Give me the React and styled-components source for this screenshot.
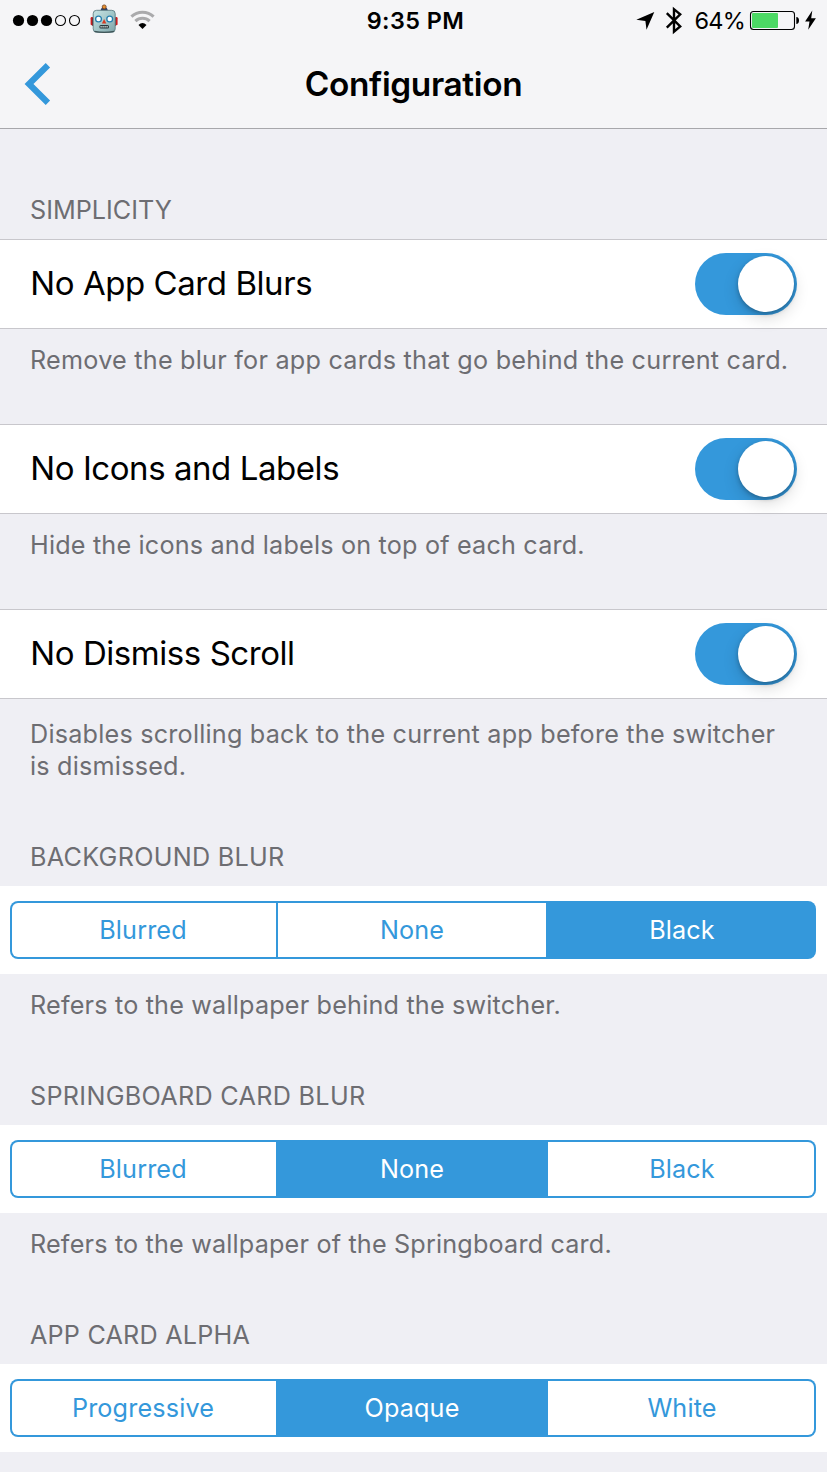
import React from "react";
import styled, { createGlobalStyle } from "styled-components";

const blue = "#3498db";

const GlobalStyle = createGlobalStyle`
  * { box-sizing: border-box; }
  html, body { margin: 0; padding: 0; background: #efeff4; }
  body { font-family: Inter, "Liberation Sans", sans-serif; overflow: hidden; }
`;

const Screen = styled.main`
  width: 827px;
  height: 1472px;
  overflow: hidden;
  background: #efeff4;
`;

const Header = styled.header`
  height: 129px;
  background: #f5f5f7;
  border-bottom: 1px solid #a7a7ab;
`;

const StatusBar = styled.div`
  display: grid;
  grid-template-columns: 1fr auto 1fr;
  height: 40px;
  color: #000;
`;

const StatusSide = styled.div`
  display: flex;
  justify-content: ${(p) => (p.$end ? "flex-end" : "flex-start")};
`;

const Clock = styled.div`
  padding-left: 4px;
  font-size: 23.4px;
  font-weight: 600;
  line-height: 41px;
  letter-spacing: 0.45px;
`;

const Percent = styled.span`
  width: 65px;
  padding-left: 10.5px;
  font-size: 23.5px;
  line-height: 42px;
  letter-spacing: -0.8px;
`;

const NavBar = styled.div`
  display: grid;
  grid-template-columns: 90px 1fr 90px;
  align-items: center;
  height: 88px;
`;

const BackButton = styled.button`
  display: flex;
  padding: 0 0 0 24px;
  border: 0;
  background: none;
`;

const Title = styled.h1`
  margin: 0;
  font-size: 33.4px;
  font-weight: 600;
  line-height: 40px;
  letter-spacing: -0.35px;
  text-align: center;
`;

const Heading = styled.h2`
  margin: 0;
  padding: ${(p) => (p.$first ? 65 : 59)}px 30px 13px;
  font-size: 25.2px;
  font-weight: 400;
  line-height: 32px;
  letter-spacing: ${(p) => p.$track || 0}px;
  color: #6d6d72;
`;

const Note = styled.p`
  margin: 0;
  padding: ${(p) => (p.$lines > 1 ? 19 : 15)}px 30px 0;
  font-size: 25.2px;
  line-height: 32px;
  letter-spacing: ${(p) => p.$track || 0}px;
  white-space: pre-line;
  color: #6d6d72;
`;

const SwitchRow = styled.div`
  display: flex;
  align-items: center;
  justify-content: space-between;
  height: 90px;
  margin-top: ${(p) => (p.$spaced ? 48 : 0)}px;
  padding: 0 30px;
  background: #fff;
  border: solid #c8c7cc;
  border-width: 1px 0;
`;

const RowLabel = styled.span`
  padding: 0 0 2px 0.3px;
  font-size: 33px;
  line-height: 40px;
  letter-spacing: -0.44px;
  color: #000;
`;

const Track = styled.button`
  display: flex;
  justify-content: flex-end;
  width: 102px;
  height: 62px;
  padding: 3px;
  border: 0;
  border-radius: 31px;
  background: ${blue};
`;

const Knob = styled.span`
  width: 56px;
  height: 56px;
  border-radius: 50%;
  background: #fff;
  box-shadow: 0 6px 16px rgba(0, 0, 0, 0.15), 0 2px 4px rgba(0, 0, 0, 0.25);
`;

const SegmentRow = styled.div`
  height: 88px;
  padding: 15px 11px 15px 10px;
  background: #fff;
`;

const Segments = styled.div`
  display: grid;
  grid-template-columns: 264px 268px 266px;
  gap: 2px;
  height: 58px;
  padding: 2px;
  border-radius: 8px;
  background: ${blue};
`;

const Segment = styled.button`
  padding: 0;
  border: 0;
  background: ${(p) => (p.$on ? blue : "#fff")};
  color: ${(p) => (p.$on ? "#fff" : blue)};
  font: 400 25.2px/54px Inter, "Liberation Sans", sans-serif;
  letter-spacing: 0.15px;
  text-align: center;

  &:first-child {
    padding-right: 2px;
    border-radius: 6px 0 0 6px;
  }
  &:last-child {
    padding-left: 2px;
    border-radius: 0 6px 6px 0;
  }
`;

const Icon = styled.svg`
  display: block;
  flex: none;
`;

const StatusLeftIcons = () => (
  <Icon width="170" height="40" viewBox="0 0 170 40">
    <circle cx="18.5" cy="20.5" r="5.6" />
    <circle cx="32.5" cy="20.5" r="5.6" />
    <circle cx="46.5" cy="20.5" r="5.6" />
    <circle cx="60.5" cy="20.5" r="5" fill="none" stroke="#000" strokeWidth="1.1" />
    <circle cx="74.5" cy="20.5" r="5" fill="none" stroke="#000" strokeWidth="1.1" />
    <defs>
      <linearGradient id="metal" x1="0" y1="0" x2="1" y2="1">
        <stop offset="0" stopColor="#c9e5e5" />
        <stop offset="0.5" stopColor="#a3c7c9" />
        <stop offset="1" stopColor="#7ea3a8" />
      </linearGradient>
    </defs>
    <path d="M100.6 11Q100.6 7.2 104.2 7.2Q107.8 7.2 107.8 11Z" fill="#273a66" />
    <circle cx="104.2" cy="6.9" r="2" fill="#e8902c" stroke="#6d3d20" strokeWidth="0.8" />
    <rect x="90.6" y="17" width="3" height="8.3" rx="1.2" fill="#c91e20" />
    <rect x="114.6" y="17" width="3" height="8.3" rx="1.2" fill="#c91e20" />
    <rect x="92.3" y="18" width="1.2" height="8" fill="#4c2328" />
    <rect x="114.6" y="18" width="1.2" height="8" fill="#4c2328" />
    <rect x="93.2" y="10.3" width="22" height="22" rx="3.4" fill="url(#metal)" stroke="#607e83" strokeWidth="0.9" />
    <path d="M94.5 31.4Q104 33.5 114 31.4" fill="none" stroke="#3f5558" strokeWidth="1.3" />
    <circle cx="98.5" cy="19" r="2.9" fill="#fff" stroke="#257fae" strokeWidth="1.3" />
    <circle cx="109.7" cy="19" r="2.9" fill="#fff" stroke="#257fae" strokeWidth="1.3" />
    <path d="M104.1 18.9L106.3 23.6H101.9Z" fill="#d83a20" />
    <rect x="99.4" y="25.1" width="9.6" height="3.3" rx="1.5" fill="#29383c" />
    <path d="M100.5 26.8H108.2" stroke="#d7e4e4" strokeWidth="1.5" strokeDasharray="1.2 .8" />
    <g fill="none" stroke="#aaaaac" strokeWidth="3.1">
      <path d="M131.4 16.6A16.2 16.2 0 0 1 153.6 16.6" />
      <path d="M135.4 21.1A10.4 10.4 0 0 1 149.6 21.1" />
    </g>
    <path d="M138.5 25Q142.5 21.2 146.5 25L142.5 29Z" />
  </Icon>
);

const LocationBluetooth = () => (
  <Icon width="50" height="40" viewBox="634 0 50 40">
    <path d="M654.3 12L646.5 29.8L645.4 20.9L636.3 19.7Z" />
    <path d="M666.8 13.2L680.2 26.4L674 31.6V9.2L680.2 14.4L666.8 27.6" fill="none" stroke="#000" strokeWidth="2.4" />
  </Icon>
);

const Battery = () => (
  <Icon width="78" height="40" viewBox="749 0 78 40">
    <rect x="750.5" y="11.5" width="44" height="18" rx="3" fill="none" stroke="#000" strokeWidth="1.1" />
    <rect x="752" y="13" width="26" height="15" rx="1" fill="#4cd964" />
    <path d="M796.3 17Q799 17.4 799 20.5Q799 23.6 796.3 24Z" />
    <path d="M812.3 10.4L805.1 21.4H809.5L808.2 29.8L815.9 18.2H811.2Z" />
  </Icon>
);

const BackArrow = () => (
  <Icon width="28" height="44" viewBox="24 62 28 44">
    <path d="M47.9 65.3L29 84L47.9 102.7" fill="none" stroke={blue} strokeWidth="6.2" />
  </Icon>
);

const Toggle = ({ label }) => (
  <Track type="button" role="switch" aria-checked="true" aria-label={label}>
    <Knob />
  </Track>
);

const Choice = ({ options, selected }) => (
  <SegmentRow>
    <Segments>
      {options.map((name, i) => (
        <Segment key={name} type="button" $on={i === selected}>
          {name}
        </Segment>
      ))}
    </Segments>
  </SegmentRow>
);

export default function App() {
  return (
    <>
      <GlobalStyle />
      <Screen>
        <Header>
          <StatusBar>
            <StatusSide><StatusLeftIcons /></StatusSide>
            <Clock>9:35 PM</Clock>
            <StatusSide $end>
              <LocationBluetooth />
              <Percent>64%</Percent>
              <Battery />
            </StatusSide>
          </StatusBar>
          <NavBar>
            <BackButton type="button" aria-label="Back"><BackArrow /></BackButton>
            <Title>Configuration</Title>
          </NavBar>
        </Header>

        <Heading $first>SIMPLICITY</Heading>
        <SwitchRow>
          <RowLabel>No App Card Blurs</RowLabel>
          <Toggle label="No App Card Blurs" />
        </SwitchRow>
        <Note $track={0.235}>Remove the blur for app cards that go behind the current card.</Note>

        <SwitchRow $spaced>
          <RowLabel>No Icons and Labels</RowLabel>
          <Toggle label="No Icons and Labels" />
        </SwitchRow>
        <Note $track={0.185}>Hide the icons and labels on top of each card.</Note>

        <SwitchRow $spaced>
          <RowLabel>No Dismiss Scroll</RowLabel>
          <Toggle label="No Dismiss Scroll" />
        </SwitchRow>
        <Note $track={0.21} $lines={2}>
          {"Disables scrolling back to the current app before the switcher\nis dismissed."}
        </Note>

        <Heading $track={0.28}>BACKGROUND BLUR</Heading>
        <Choice options={["Blurred", "None", "Black"]} selected={2} />
        <Note $track={0.185}>Refers to the wallpaper behind the switcher.</Note>

        <Heading $track={0.3}>SPRINGBOARD CARD BLUR</Heading>
        <Choice options={["Blurred", "None", "Black"]} selected={1} />
        <Note $track={0.175}>Refers to the wallpaper of the Springboard card.</Note>

        <Heading $track={0.2}>APP CARD ALPHA</Heading>
        <Choice options={["Progressive", "Opaque", "White"]} selected={1} />
      </Screen>
    </>
  );
}
